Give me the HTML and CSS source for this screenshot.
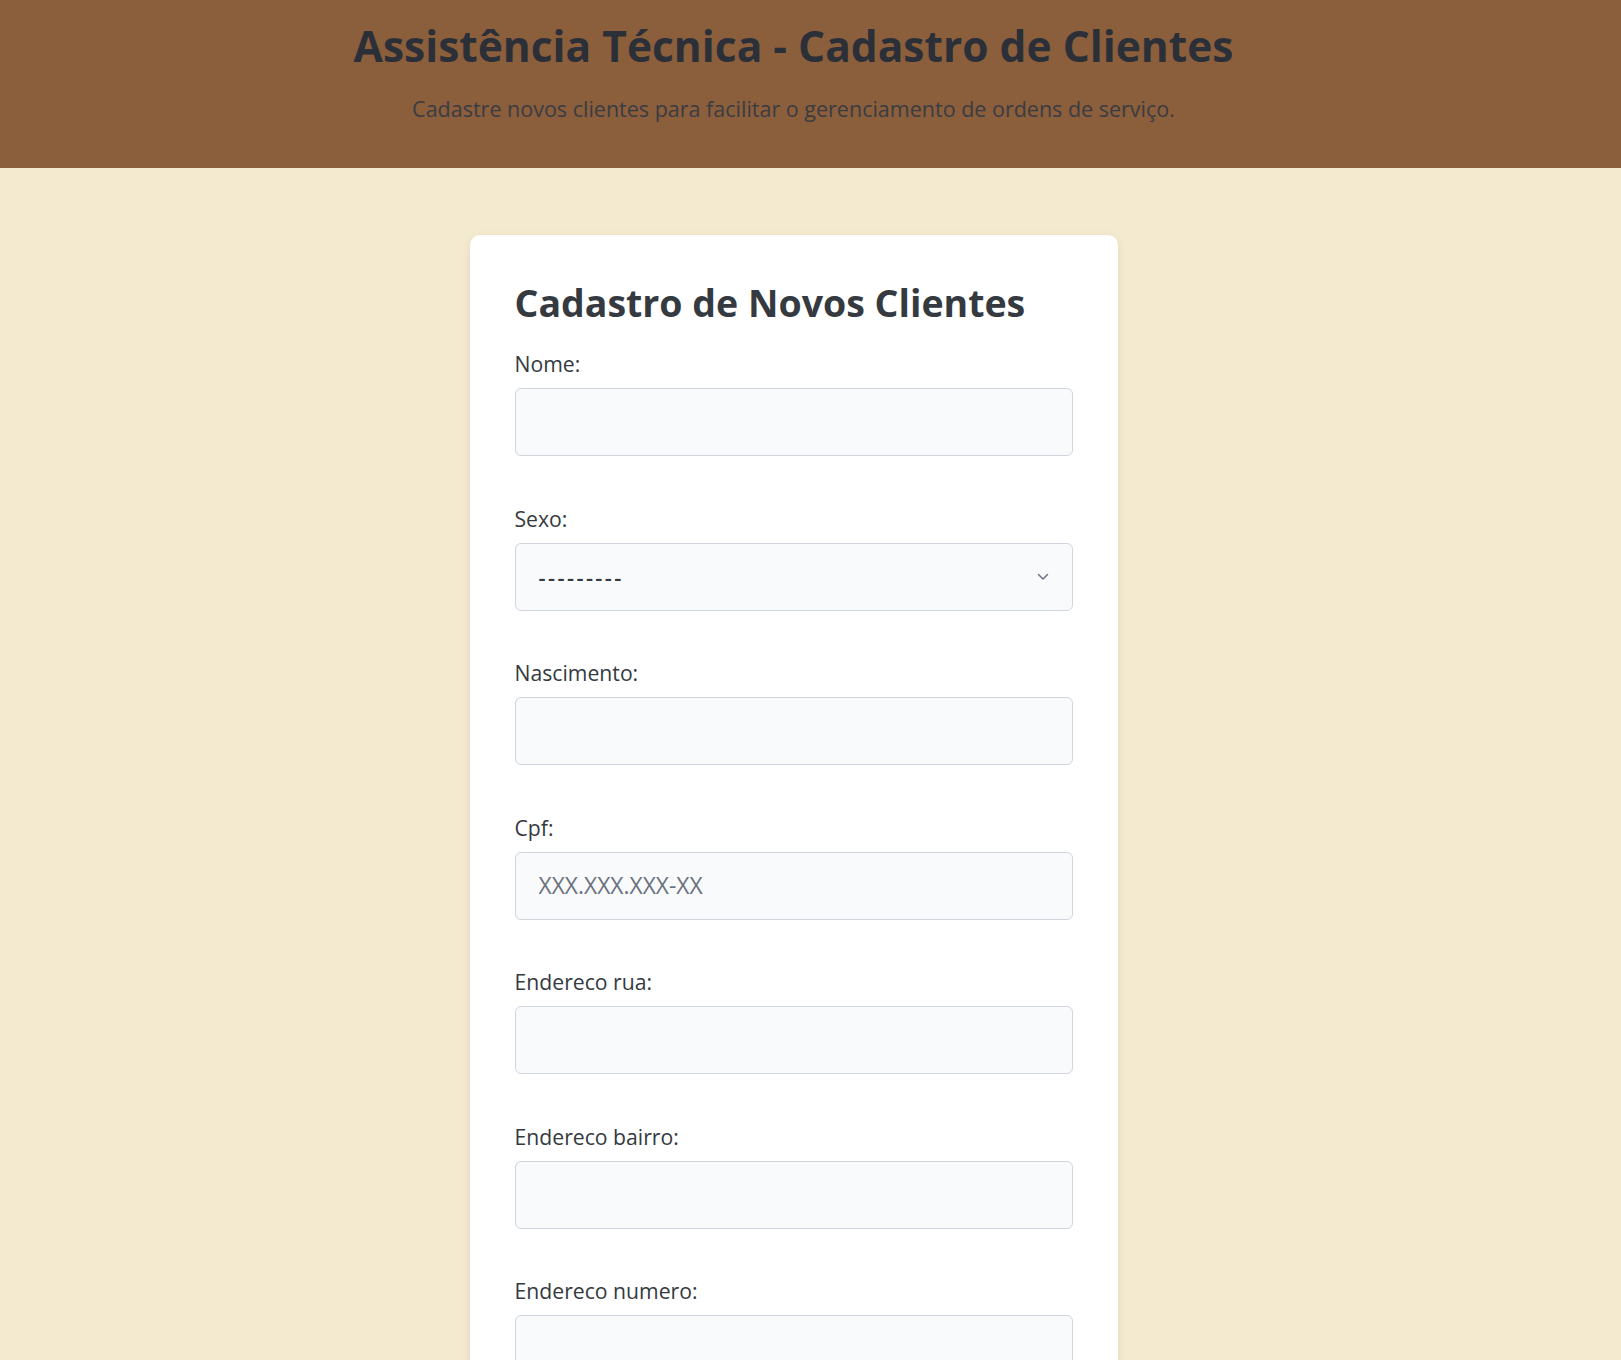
FILE: index.html
```html
<!DOCTYPE html>
<html lang="pt-BR">
<head>
<meta charset="utf-8">
<title>Assistência Técnica - Cadastro de Clientes</title>
<link rel="stylesheet" href="styles.css">
</head>
<body>
<header class="site-header">
  <h1 class="site-title">Assistência Técnica - Cadastro de Clientes</h1>
  <p class="site-subtitle">Cadastre novos clientes para facilitar o gerenciamento de ordens de serviço.</p>
</header>
<main class="page">
  <section class="card">
    <h2 class="card-title">Cadastro de Novos Clientes</h2>
    <form class="form">
      <div class="field">
        <label class="field-label" for="nome">Nome:</label>
        <input class="field-input" id="nome" type="text">
      </div>
      <div class="field">
        <label class="field-label" for="sexo">Sexo:</label>
        <div class="select-wrap">
          <select class="field-input field-select" id="sexo">
            <option>---------</option>
            <option>Masculino</option>
            <option>Feminino</option>
          </select>
          <svg class="select-chevron" width="12" height="8" viewBox="0 0 12 8" aria-hidden="true"><path d="M1.5 1.5 L6 6 L10.5 1.5" fill="none" stroke="#6b7280" stroke-width="1.5" stroke-linecap="round" stroke-linejoin="round"/></svg>
        </div>
      </div>
      <div class="field">
        <label class="field-label" for="nascimento">Nascimento:</label>
        <input class="field-input" id="nascimento" type="text">
      </div>
      <div class="field">
        <label class="field-label" for="cpf">Cpf:</label>
        <input class="field-input" id="cpf" type="text" placeholder="XXX.XXX.XXX-XX">
      </div>
      <div class="field">
        <label class="field-label" for="rua">Endereco rua:</label>
        <input class="field-input" id="rua" type="text">
      </div>
      <div class="field">
        <label class="field-label" for="bairro">Endereco bairro:</label>
        <input class="field-input" id="bairro" type="text">
      </div>
      <div class="field">
        <label class="field-label" for="numero">Endereco numero:</label>
        <input class="field-input" id="numero" type="text">
      </div>
    </form>
  </section>
</main>
</body>
</html>
```
FILE: styles.css
```css
* {
  box-sizing: border-box;
}

body {
  margin: 0;
  background: #f4ead0;
  font-family: "Open Sans", "Noto Sans", sans-serif;
  color: #343a40;
}

.site-header {
  background: #8b5e3c;
  padding: 18px 34px 44px 0;
  text-align: center;
}

.site-title {
  margin: 0;
  font-size: 42.5px;
  line-height: 56px;
  font-weight: 700;
  color: #2b3038;
}

.site-subtitle {
  margin: 20px 0 0;
  font-size: 21.5px;
  line-height: 30px;
  color: #3a3c42;
}

.page {
  padding: 67px 34px 60px 0;
}

.card {
  width: 648px;
  margin: 0 auto;
  background: #ffffff;
  border-radius: 10px;
  padding: 48px 45px 45px;
  box-shadow: 0 2px 10px rgba(0, 0, 0, 0.08);
}

.card-title {
  margin: 0 0 26px;
  font-size: 37.5px;
  line-height: 40px;
  font-weight: 700;
  color: #343a40;
}

.form {
  display: flex;
  flex-direction: column;
}

.field {
  display: flex;
  flex-direction: column;
  margin-bottom: 47.5px;
}

.field-label {
  font-size: 21.2px;
  line-height: 30px;
  margin-bottom: 9px;
  color: #343a40;
}

.field-input {
  display: block;
  width: 100%;
  height: 68px;
  border: 1px solid #d1d5de;
  border-radius: 6px;
  background: #f9fafb;
  padding: 0 23px;
  font-family: inherit;
  font-size: 22.8px;
  color: #343a40;
  outline: none;
}

.field-input::placeholder {
  color: #6b7280;
}

.select-wrap {
  position: relative;
}

.field-select {
  appearance: none;
  -webkit-appearance: none;
  font-size: 22px;
  letter-spacing: 2.4px;
  font-weight: 600;
}

.select-chevron {
  position: absolute;
  right: 24px;
  top: 50%;
  margin-top: -4px;
  pointer-events: none;
}
```
